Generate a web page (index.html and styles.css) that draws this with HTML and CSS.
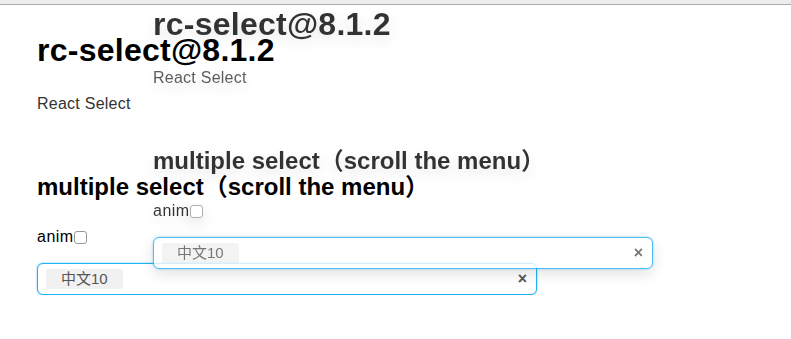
FILE: index.html
```html
<!DOCTYPE html>
<html>
<head>
<meta charset="utf-8">
<title>rc-select</title>
<link rel="stylesheet" href="styles.css">
</head>
<body>
<div class="topbar"></div>
<div class="stage">
  <div class="page">
    <h1 class="title">rc-select@8.1.2</h1>
    <p class="desc">React Select</p>
    <h2 class="subtitle">multiple select（scroll the menu）</h2>
    <label class="anim">anim<span class="checkbox"></span></label>
    <div class="select">
      <span class="tag">中文10</span>
      <span class="clear">×</span>
    </div>
  </div>
  <div class="page ghost" aria-hidden="true">
    <h1 class="title">rc-select@8.1.2</h1>
    <p class="desc">React Select</p>
    <h2 class="subtitle">multiple select（scroll the menu）</h2>
    <label class="anim">anim<span class="checkbox"></span></label>
    <div class="select">
      <span class="tag">中文10</span>
      <span class="clear">×</span>
    </div>
  </div>
</div>
</body>
</html>
```

FILE: styles.css
```css
html, body {
  margin: 0;
  padding: 0;
  background: #fff;
}
body {
  font-family: "Liberation Sans", Arial, "Noto Sans CJK SC", sans-serif;
  color: #000;
  overflow: hidden;
}
.topbar {
  height: 4px;
  background: #ededed;
  border-bottom: 1px solid #a9a9a9;
}
.stage {
  position: relative;
}
.page {
  display: flex;
  flex-direction: column;
  align-items: flex-start;
  padding-left: 37px;
  background: transparent;
}
.title {
  margin: 27px 0 0;
  font-size: 32px;
  line-height: 37px;
  font-weight: bold;
  letter-spacing: 0.25px;
  color: #000;
}
.desc {
  margin: 26px 0 0;
  font-size: 16px;
  line-height: 18px;
  letter-spacing: 0.25px;
  color: #333;
}
.subtitle {
  margin: 60px 0 0;
  font-size: 24px;
  line-height: 28px;
  font-weight: bold;
  color: #000;
}
.anim {
  margin-top: 27px;
  display: flex;
  align-items: center;
  font-size: 16px;
  line-height: 18px;
  letter-spacing: 0.5px;
  color: #000;
}
.checkbox {
  display: inline-block;
  width: 11px;
  height: 11px;
  border: 1px solid #9a9a9a;
  border-radius: 3px;
  background: #fff;
  margin-top: 1px;
}
.select {
  margin-top: 17px;
  box-sizing: border-box;
  width: 500px;
  height: 32px;
  border: 1px solid #23b0f5;
  border-radius: 6px;
  box-shadow: 0 0 2px rgba(45, 183, 245, 0.8);
  background: #fff;
  display: flex;
  align-items: center;
  padding: 0 9px 0 8px;
}
.tag {
  box-sizing: border-box;
  height: 20px;
  line-height: 20px;
  padding: 0 15px;
  background: #f1f1f1;
  border-radius: 3px;
  font-size: 15px;
  color: #555;
}
.clear {
  margin-left: auto;
  font-size: 16px;
  font-weight: bold;
  color: #555;
  line-height: 16px;
}
.ghost {
  position: absolute;
  left: 116px;
  top: -26px;
  width: 560px;
  opacity: 0.8;
  pointer-events: none;
  filter: blur(0.3px) drop-shadow(0 5px 7px rgba(0, 0, 0, 0.14));
}
```
